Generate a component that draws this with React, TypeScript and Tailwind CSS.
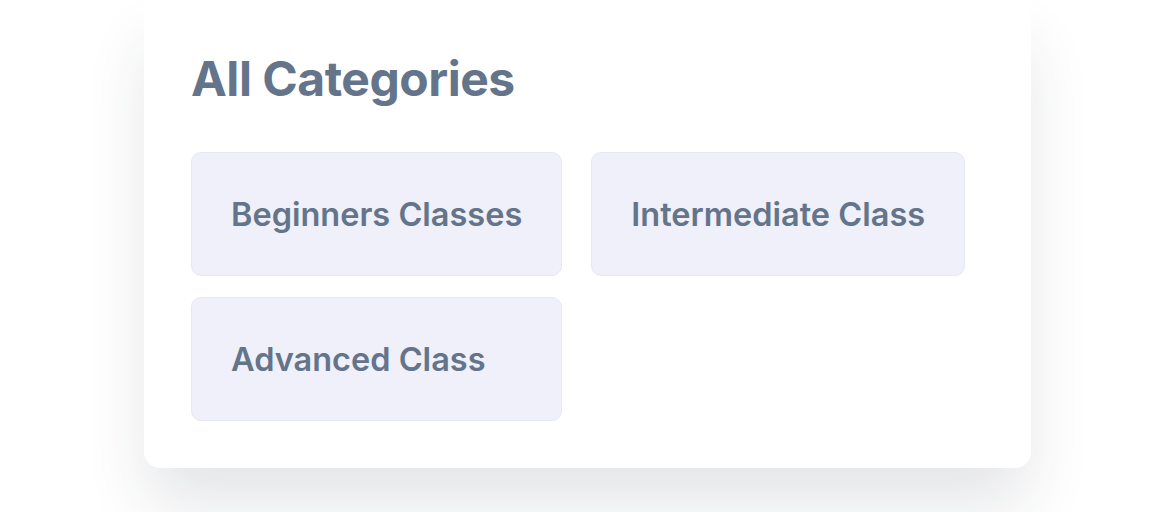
import React from 'react';

const CATEGORIES = ['Beginners Classes', 'Intermediate Class', 'Advanced Class'];

const App: React.FC = () => {
  return (
    <div className="min-h-[512px] w-full overflow-hidden bg-white font-['Inter',sans-serif]">
      <div className="ml-[144px] w-[887px] rounded-b-2xl bg-white px-[47px] pb-[47px] pt-[55px] shadow-[0_40px_64px_-4px_rgba(30,41,59,0.12)]">
        {/* Heading */}
        <h2 className="text-[48px] font-bold leading-none tracking-[-0.01em] text-[#64748b]">
          All Categories
        </h2>

        {/* Category tiles */}
        <div className="mt-[49px] grid grid-cols-[auto_auto] justify-start gap-x-[29px] gap-y-[21px]">
          {CATEGORIES.map((name) => (
            <button
              key={name}
              className="rounded-[10px] border border-[#e6e8f2] bg-[#eff0f9] px-[39px] pb-[41px] pt-[43px] text-left text-[32.5px] font-semibold leading-[38px] text-[#64748b]"
            >
              {name}
            </button>
          ))}
        </div>
      </div>
    </div>
  );
};

export default App;
